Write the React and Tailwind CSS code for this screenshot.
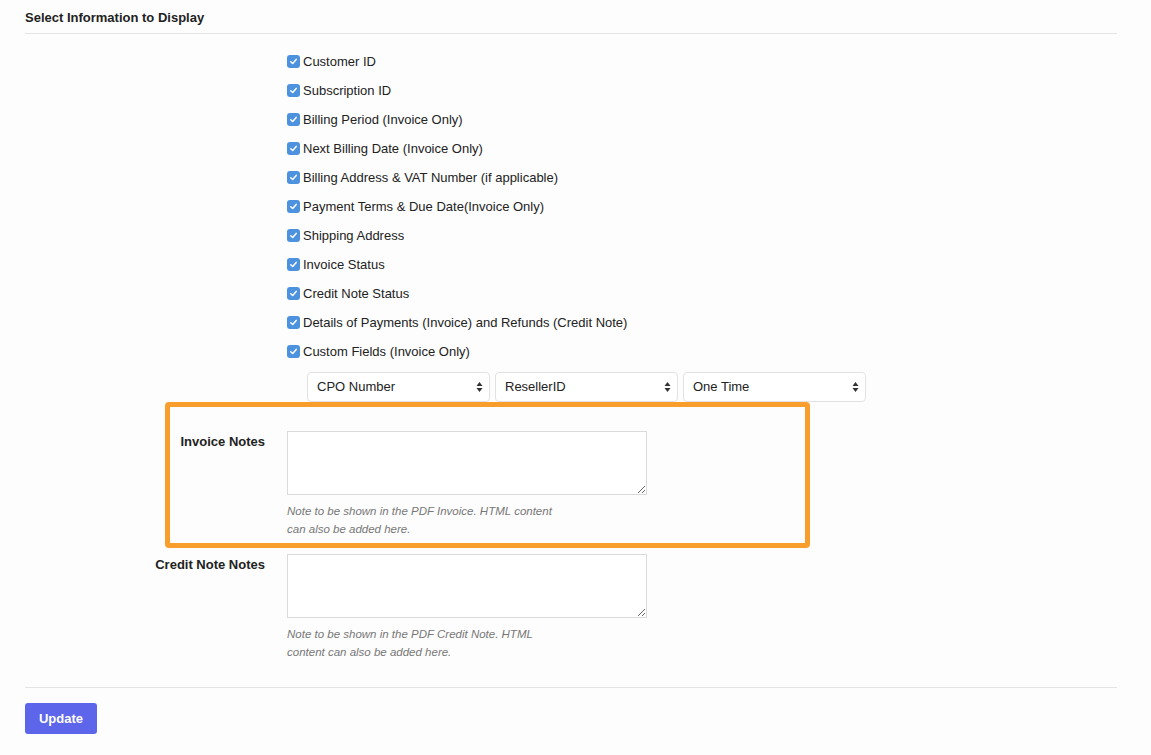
import React from "react";

// fields shown on the invoice / credit note PDF
const FIELDS = [
  "Customer ID",
  "Subscription ID",
  "Billing Period (Invoice Only)",
  "Next Billing Date (Invoice Only)",
  "Billing Address & VAT Number (if applicable)",
  "Payment Terms & Due Date(Invoice Only)",
  "Shipping Address",
  "Invoice Status",
  "Credit Note Status",
  "Details of Payments (Invoice) and Refunds (Credit Note)",
  "Custom Fields (Invoice Only)",
];

const SELECTS = ["CPO Number", "ResellerID", "One Time"];

function Check() {
  return (
    <span className="w-[13px] h-[13px] rounded-[3px] bg-[#4c92df] flex items-center justify-center shrink-0">
      <svg width="9" height="9" viewBox="0 0 9 9" fill="none">
        <path d="M1.8 4.7 L3.7 6.5 L7.2 2.4" stroke="#fff" strokeWidth="1.5" strokeLinecap="round" strokeLinejoin="round" />
      </svg>
    </span>
  );
}

function SelectBox({ label }) {
  return (
    <div className="w-[183px] h-[30px] bg-white border border-[#e2e2e2] rounded-[4px] flex items-center justify-between pl-[9px] pr-[6px]">
      <span>{label}</span>
      <svg width="7" height="12" viewBox="0 0 7 12">
        <path d="M3.5 1 L6.5 5 L0.5 5 Z" fill="#333" />
        <path d="M3.5 11 L6.5 7 L0.5 7 Z" fill="#333" />
      </svg>
    </div>
  );
}

export default function App() {
  return (
    <div className="min-h-screen bg-[#fdfdfd] font-['Liberation_Sans',Arial,sans-serif] text-[13px] text-[#222] pl-[25px] pr-[34px]">
      {/* header */}
      <div className="h-[34px] flex items-end pb-[7px] border-b border-[#e4e4e4]">
        <h1 className="font-bold leading-[16px]">Select Information to Display</h1>
      </div>

      {/* checkbox list */}
      <div className="ml-[262px] mt-[13px] flex flex-col">
        {FIELDS.map((f) => (
          <div key={f} className="h-[29px] flex items-center gap-[3px]">
            <Check />
            <span>{f}</span>
          </div>
        ))}
      </div>

      {/* custom field selects */}
      <div className="ml-[282px] mt-[6px] flex gap-[5px]">
        {SELECTS.map((s) => (
          <SelectBox key={s} label={s} />
        ))}
      </div>

      {/* highlighted invoice notes */}
      <div className="ml-[140px] w-[645px] h-[146px] border-[5px] border-[#f99d2c] rounded-[4px] pt-[24px]">
        <div className="flex gap-[22px]">
          <label className="w-[95px] text-right font-bold leading-[16px] mt-[3px]">Invoice Notes</label>
          <div>
            <textarea className="block w-[360px] h-[64px] bg-white border border-[#dadada]" />
            <p className="mt-[7px] w-[275px] text-[11.5px] italic leading-[18px] text-[#777]">
              Note to be shown in the PDF Invoice. HTML content can also be added here.
            </p>
          </div>
        </div>
      </div>

      {/* credit note notes */}
      <div className="mt-[6px] flex gap-[22px]">
        <label className="w-[240px] text-right font-bold leading-[16px] mt-[3px]">Credit Note Notes</label>
        <div>
          <textarea className="block w-[360px] h-[64px] bg-white border border-[#dadada]" />
          <p className="mt-[7px] w-[260px] text-[11.5px] italic leading-[18px] text-[#777]">
            Note to be shown in the PDF Credit Note. HTML content can also be added here.
          </p>
        </div>
      </div>

      <div className="mt-[26px] border-t border-[#e4e4e4]" />

      <button className="mt-[15px] w-[72px] h-[31px] rounded-[3px] bg-[#5d65ea] text-white font-bold">
        Update
      </button>
    </div>
  );
}
